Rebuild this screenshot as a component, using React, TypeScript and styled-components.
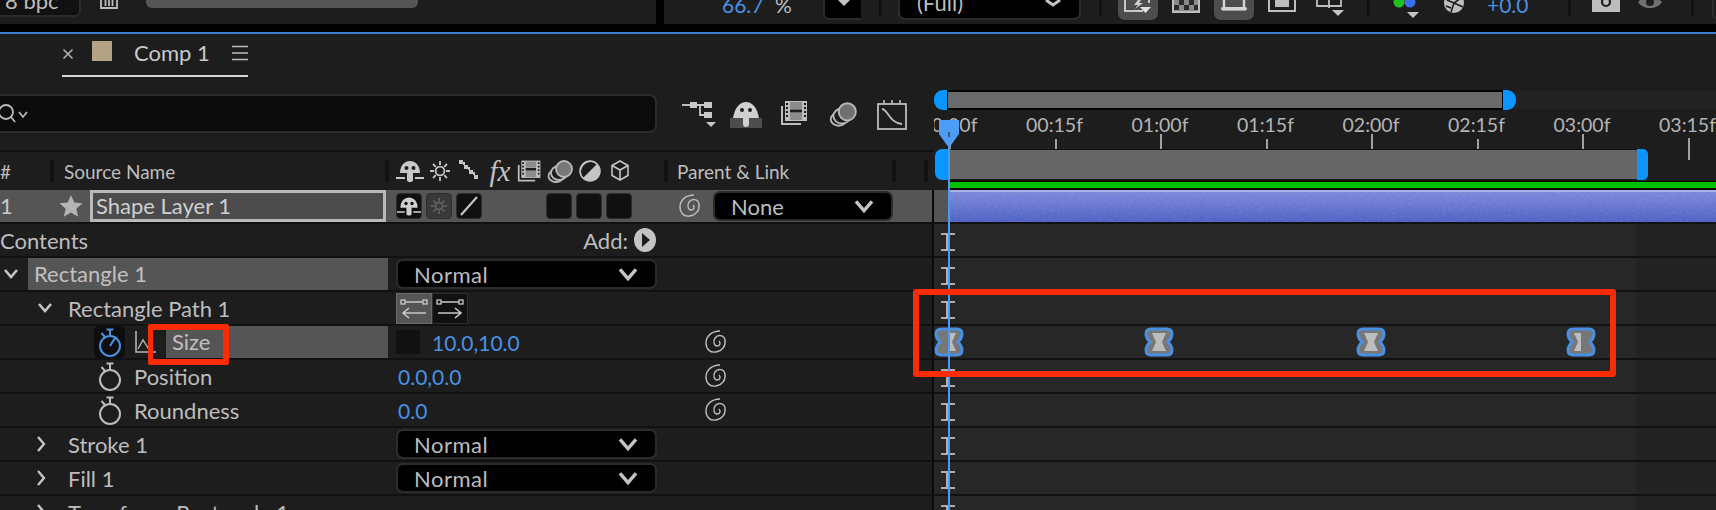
import React from "react";
import styled, { createGlobalStyle } from "styled-components";

const Global = createGlobalStyle`
  html, body { margin: 0; padding: 0; background: #1d1d1d; overflow: hidden; }
  body { font-family: Lato, "Open Sans", "Liberation Sans", sans-serif; color: #bdbdbd; }
  * { box-sizing: border-box; }
`;

const TEXT = "#bdbdbd";
const BLUE = "#4a90e2";

const Page = styled.div`
  position: relative;
  width: 1716px;
  height: 510px;
  overflow: hidden;
  background: #1d1d1d;
`;

/* ---------- top viewer toolbar ---------- */
const TopBar = styled.div`
  display: flex;
  align-items: flex-start;
  height: 32px;
  overflow: hidden;
  background: linear-gradient(#1d1d1d 24px, #000 24px);
`;
const BpcBox = styled.div`
  flex: none;
  width: 81px;
  height: 17px;
  background: #111;
  border: 2px solid #2b2b2b;
  border-width: 0 2px 2px 0;
  border-radius: 0 0 6px 0;
  padding-left: 5px;
  font-size: 22px;
  line-height: 22px;
  color: ${TEXT};
  overflow: hidden;
  & > span { display: block; margin-top: -10px; white-space: nowrap; }
`;
const ToolIcon = styled.svg<{ $ml: number; $w: number }>`
  flex: none;
  display: block;
  margin-left: ${(p) => p.$ml}px;
  width: ${(p) => p.$w}px;
  height: 24px;
`;
const ProgressTrack = styled.div`
  flex: none;
  margin-left: 28px;
  width: 272px;
  height: 8px;
  background: #555;
  border-radius: 0 0 6px 6px;
`;
const PanelGap = styled.div`
  flex: none;
  margin-left: 238px;
  width: 8px;
  height: 24px;
  background: #000;
`;
const ZoomValue = styled.div`
  flex: none;
  margin: -6px 0 0 58px;
  width: 53px;
  font-size: 21px;
  line-height: 22px;
  color: ${BLUE};
`;
const Percent = styled.div`
  flex: none;
  margin-top: -6px;
  width: 48px;
  font-size: 21px;
  line-height: 22px;
  color: ${TEXT};
`;
const MiniSelect = styled.div`
  flex: none;
  position: relative;
  width: 38px;
  height: 20px;
  background: #000;
  border: 2px solid #2b2b2b;
  border-top: 0;
  border-right: 0;
  border-radius: 0 0 0 6px;
`;
const TopSep = styled.div<{ $ml: number }>`
  flex: none;
  margin-left: ${(p) => p.$ml}px;
  width: 3px;
  height: 16px;
  background: #111;
`;
const FullSelect = styled.div`
  flex: none;
  display: flex;
  justify-content: space-between;
  margin-left: 16px;
  width: 183px;
  height: 20px;
  background: #000;
  border: 2px solid #2b2b2b;
  border-top: 0;
  border-radius: 0 0 7px 7px;
  padding: 0 16px 0 17px;
  font-size: 22px;
  line-height: 22px;
  color: ${TEXT};
  overflow: hidden;
  & > span { margin-top: -8px; }
`;
const ToggleOn = styled.div<{ $ml: number }>`
  flex: none;
  margin-left: ${(p) => p.$ml}px;
  width: 40px;
  height: 20px;
  background: #4d4d4d;
  border-radius: 0 0 7px 7px;
  display: flex;
  justify-content: center;
`;
const Exposure = styled.div`
  flex: none;
  margin: -6px 0 0 21px;
  width: 41px;
  font-size: 21px;
  line-height: 22px;
  color: ${BLUE};
`;
const EdgeBox = styled.div`
  flex: none;
  margin-left: 18px;
  width: 6px;
  height: 20px;
  border: 2px solid #2b2b2b;
  border-right: 0;
  border-top: 0;
  border-radius: 0 0 0 6px;
`;
const FocusLine = styled.div`
  height: 2px;
  background: #3f7fce;
`;

/* ---------- tab bar ---------- */
const TabBar = styled.div`
  display: flex;
  height: 46px;
`;
const Tab = styled.div`
  display: flex;
  align-items: center;
  margin-left: 62px;
  width: 186px;
  height: 43px;
  border-bottom: 2px solid #d6d6d6;
`;
const TabClose = styled.span`
  width: 30px;
  display: block;
`;
const Swatch = styled.span`
  width: 20px;
  height: 20px;
  margin-bottom: 7px;
  background: #b3a284;
`;
const TabTitle = styled.span`
  margin-left: 22px;
  width: 98px;
  font-size: 22px;
  line-height: 26px;
  margin-bottom: 3px;
  color: #c8c8c8;
`;
const TabMenu = styled.svg`
  width: 16px;
  height: 16px;
  margin-bottom: 4px;
`;

/* ---------- split ---------- */
const Split = styled.div`
  display: flex;
`;
const LeftPane = styled.div`
  flex: none;
  width: 934px;
`;
const RightPane = styled.div`
  position: relative;
  flex: 1;
  min-width: 0;
  overflow: hidden;
`;

const ToolRow = styled.div`
  display: flex;
  align-items: flex-start;
  height: 72px;
  border-bottom: 2px solid #111;
`;
const SearchBox = styled.div`
  display: flex;
  align-items: center;
  margin-top: 14px;
  width: 657px;
  height: 39px;
  background: #0b0b0b;
  border: 2px solid #2b2b2b;
  border-left: 0;
  border-radius: 0 8px 8px 0;
`;
const PaneIcon = styled.svg<{ $ml: number; $w: number }>`
  flex: none;
  margin: 19px 0 0 ${(p) => p.$ml}px;
  width: ${(p) => p.$w}px;
  height: 32px;
`;

const HeaderRow = styled.div`
  display: flex;
  align-items: center;
  height: 38px;
  font-size: 19px;
  color: ${TEXT};
`;
const HeadSep = styled.div<{ $ml: number }>`
  flex: none;
  margin-left: ${(p) => p.$ml}px;
  width: 4px;
  height: 22px;
  background: #111;
`;
const HeadText = styled.span<{ $w: number; $ml: number }>`
  flex: none;
  margin-left: ${(p) => p.$ml}px;
  width: ${(p) => p.$w}px;
  white-space: nowrap;
`;
const HeadIcon = styled.svg`
  flex: none;
  width: 30px;
  height: 26px;
`;
const FxText = styled.span`
  flex: none;
  width: 30px;
  text-align: center;
  font-family: "Liberation Serif", serif;
  font-style: italic;
  font-size: 29px;
  line-height: 26px;
  color: #c4c4c4;
`;

/* ---------- layer rows ---------- */
const LayerRow = styled.div`
  display: flex;
  align-items: center;
  height: 34px;
  border-bottom: 2px solid #111;
  border-right: 2px solid #0a0a0a;
  background: #555;
  font-size: 22px;
  color: #c8c8c8;
`;
const LayerIndex = styled.span`
  width: 59px;
  line-height: 32px;
`;
const Star = styled.svg`
  flex: none;
  width: 24px;
  height: 24px;
  margin-right: 7px;
`;
const NameField = styled.div`
  flex: none;
  width: 296px;
  height: 32px;
  border: 3px solid #b9b9b9;
  background: #4b4b4b;
  padding-left: 3px;
  line-height: 26px;
  color: #cfcfcf;
`;
const SwitchGroup = styled.div<{ $ml: number }>`
  flex: none;
  display: flex;
  gap: 4px;
  margin-left: ${(p) => p.$ml}px;
`;
const SwitchBox = styled.div<{ $dim?: boolean }>`
  width: 26px;
  height: 26px;
  border: 1px solid #2e2e2e;
  border-radius: 4px;
  background: ${(p) => (p.$dim ? "#393939" : "#101010")};
  display: flex;
  align-items: center;
  justify-content: center;
`;
const SwitchIcon = styled.svg`
  width: 24px;
  height: 24px;
`;
const Spiral = styled.svg<{ $ml?: number }>`
  flex: none;
  display: block;
  width: 26px;
  height: 26px;
  margin-left: ${(p) => p.$ml ?? 3}px;
`;
const Select = styled.div<{ $w: number; $ml?: number; $track?: number }>`
  flex: none;
  display: flex;
  align-items: center;
  justify-content: space-between;
  width: ${(p) => p.$w}px;
  height: 30px;
  margin-left: ${(p) => p.$ml ?? 0}px;
  padding: 0 15px 0 16px;
  background: #000;
  border: 2px solid #2b2b2b;
  border-radius: 7px;
  font-size: 22px;
  color: ${TEXT};
  & > span { letter-spacing: ${(p) => p.$track ?? 0}px; }
`;
const Chevron = styled.svg`
  flex: none;
  width: 24px;
  height: 16px;
`;

const PropRow = styled.div`
  display: grid;
  grid-template-columns: 388px 312px 32px 1fr;
  align-items: center;
  height: 34px;
  border-bottom: 2px solid #111;
  border-right: 2px solid #0a0a0a;
  font-size: 22px;
  color: ${TEXT};
`;
const NameCell = styled.div<{ $indent: number }>`
  display: flex;
  align-items: center;
  height: 32px;
  padding-left: ${(p) => p.$indent}px;
  white-space: nowrap;
`;
const ValueCell = styled.div<{ $pad?: number }>`
  display: flex;
  align-items: center;
  height: 32px;
  padding-left: ${(p) => p.$pad ?? 8}px;
`;
const Twist = styled.svg<{ $mr: number }>`
  flex: none;
  width: 16px;
  height: 16px;
  margin-right: ${(p) => p.$mr}px;
`;
const Highlight = styled.div<{ $ml?: number }>`
  flex: 1;
  align-self: stretch;
  margin-left: ${(p) => p.$ml ?? 0}px;
  padding-left: 6px;
  background: #555;
  line-height: 32px;
  color: #c0c0c0;
`;
const AddLabel = styled.div`
  display: flex;
  align-items: center;
  justify-content: flex-end;
  gap: 5px;
  width: 261px;
  color: ${TEXT};
  font-size: 22px;
`;
const StopBox = styled.div<{ $on?: boolean }>`
  flex: none;
  width: 31px;
  height: 32px;
  margin-right: ${(p) => (p.$on ? 10 : 9)}px;
  border-radius: 5px;
  background: ${(p) => (p.$on ? "#0e0e0e" : "transparent")};
  display: flex;
  align-items: center;
  justify-content: center;
`;
const StopIcon = styled.svg`
  width: 26px;
  height: 30px;
`;
const GraphIcon = styled.svg`
  flex: none;
  width: 22px;
  height: 26px;
`;
const ExprSwatch = styled.div`
  flex: none;
  width: 24px;
  height: 24px;
  margin-right: 12px;
  background: #111;
`;
const BlueValue = styled.span`
  color: ${BLUE};
  font-size: 21px;
`;
const PathButtons = styled.div`
  display: flex;
`;
const PathButton = styled.div<{ $on?: boolean }>`
  width: 36px;
  height: 31px;
  background: ${(p) => (p.$on ? "#555" : "#111")};
  border: 1px solid ${(p) => (p.$on ? "#6a6a6a" : "#2e2e2e")};
  display: flex;
  align-items: center;
  justify-content: center;
`;

/* ---------- timeline ---------- */
const NavBar = styled.div`
  display: flex;
  height: 30px;
  padding-top: 10px;
`;
const NavCap = styled.div<{ $side: "l" | "r" }>`
  flex: none;
  width: 13px;
  height: 20px;
  background: #0b96ff;
  border-radius: ${(p) => (p.$side === "l" ? "9px 0 0 9px" : "0 9px 9px 0")};
`;
const NavFill = styled.div`
  flex: none;
  width: 556px;
  height: 20px;
  background: #6b6b6b;
  border: 2px solid #000;
  border-right-width: 1px;
  border-left-width: 1px;
`;
const NavRest = styled.div`
  flex: 1;
  height: 18px;
  margin-top: 1px;
  background: #222;
`;
const Ruler = styled.div`
  position: relative;
  height: 39px;
`;
const RulerLabel = styled.span`
  position: absolute;
  top: 3px;
  transform: translateX(-50%);
  font-size: 19.5px;
  line-height: 24px;
  color: #b4b4b4;
  white-space: nowrap;
`;
const Tick = styled.span<{ $h: number }>`
  position: absolute;
  top: ${(p) => 39 - p.$h}px;
  width: 2px;
  height: ${(p) => p.$h}px;
  background: #a0a0a0;
`;
const LongTick = styled(Tick)`
  top: 28px;
  height: 22px;
`;
const CompBar = styled.div`
  display: flex;
  height: 32px;
  margin-left: 1px;
`;
const CompCap = styled.div<{ $side: "l" | "r" }>`
  flex: none;
  width: ${(p) => (p.$side === "l" ? 14 : 11)}px;
  height: 31px;
  background: #0b96ff;
  border-radius: ${(p) => (p.$side === "l" ? "7px 0 0 7px" : "0 5px 5px 0")};
`;
const CompFill = styled.div`
  flex: none;
  width: 688px;
  height: 32px;
  background: #666;
  border: 2px solid #111;
  border-width: 1px 0 2px;
`;
const GreenBar = styled.div`
  height: 9px;
  margin-left: 15px;
  background: #00c000;
  border: 0 solid #000;
  border-width: 1px 0 2px;
`;
const TrackLayer = styled.div`
  display: flex;
  height: 34px;
  border-bottom: 2px solid #111;
`;
const LayerGutter = styled.div`
  flex: none;
  width: 15px;
  background: #555;
`;
const LayerClip = styled.div`
  position: relative;
  flex: 1;
  overflow: hidden;
  background: linear-gradient(#7786dc, #6b7bd8 30%, #4a5dc6);
  border-top: 2px solid #a7b2e6;
`;
const ClipGrain = styled.svg`
  position: absolute;
  inset: 0;
  width: 100%;
  height: 100%;
  opacity: 0.16;
`;
const TrackRow = styled.div`
  position: relative;
  height: 34px;
  border-bottom: 2px solid #111;
  background: linear-gradient(to right, #272727 702px, #222 702px);
`;
const IBeam = styled.div`
  position: absolute;
  top: 9px;
  left: 7px;
  width: 14px;
  height: 18px;
  border-top: 2px solid #b0b0b0;
  border-bottom: 2px solid #b0b0b0;
  &::before {
    content: "";
    position: absolute;
    left: 5px;
    top: 0;
    width: 4px;
    height: 14px;
    background: #b0b0b0;
  }
`;
const Keyframe = styled.svg`
  position: absolute;
  top: 1px;
  width: 30px;
  height: 30px;
  transform: translateX(-50%);
`;
const PlayLine = styled.div`
  position: absolute;
  left: 14px;
  top: 55px;
  width: 2px;
  height: 380px;
  background: #4a9bf2;
`;
const PlayHead = styled.svg`
  position: absolute;
  left: 4px;
  top: 40px;
  width: 22px;
  height: 28px;
`;

/* ---------- red annotations ---------- */
const SizeCallout = styled.div`
  position: absolute;
  left: 148px;
  top: 324px;
  width: 81px;
  height: 41px;
  border: 6px solid #fb2c05;
  border-left-width: 5px;
  border-radius: 2px;
`;
const KeyCallout = styled.div`
  position: absolute;
  left: 913px;
  top: 289px;
  width: 703px;
  height: 88px;
  border: 6px solid #fb2c05;
  border-radius: 3px;
`;

/* ---------- drawings ---------- */
const C = "#c4c4c4";

const ChevronDown = () => (
  <Chevron viewBox="0 0 20 14">
    <path d="M3 3l7 8 7-8" fill="none" stroke={C} strokeWidth="3" />
  </Chevron>
);
const TwistDown = ({ mr }: { mr: number }) => (
  <Twist $mr={mr} viewBox="0 0 16 16">
    <path d="M2 4l6 7 6-7" fill="none" stroke={C} strokeWidth="2.6" />
  </Twist>
);
const TwistRight = ({ mr }: { mr: number }) => (
  <Twist $mr={mr} viewBox="0 0 16 16">
    <path d="M5 1l6 7-6 7" fill="none" stroke={C} strokeWidth="2.4" />
  </Twist>
);
const SpiralPath = () => (
  <path
    d="M17 2C9 2 3 7 3 14c0 6 4 10 10 9 6-1 10-6 9-12-1-5-7-6-10-2-2 3-1 8 2 8 3 0 4-3 2-5"
    fill="none"
    stroke="#bdbdbd"
    strokeWidth="1.4"
  />
);
const ShyPaths = ({ color = "#d0d0d0", bg = "#111" }: { color?: string; bg?: string }) => (
  <>
    <path d="M4 15C4 7 9 3 14 3s10 4 10 12z" fill={color} />
    <circle cx="10.500" cy="10" r="2" fill={bg} />
    <circle cx="17.500" cy="10" r="2" fill={bg} />
    <rect x="11" y="14" width="6" height="10" rx="2" fill={color} />
    <path d="M0 20h9M19 20h9" stroke={color} strokeWidth="1.800" />
  </>
);
const Sun = ({ color = C }: { color?: string }) => (
  <g stroke={color} strokeWidth="1.8" fill="none">
    <circle cx="15" cy="13" r="4.4" />
    <path d="M15 3v4M15 19v4M5 13h4M21 13h4M8 6l2.8 2.8M22 6l-2.8 2.8M8 20l2.8-2.8M22 20l-2.8-2.8" />
  </g>
);
const FilmPaths = () => (
  <>
    <rect x="5" y="1" width="22" height="20" fill="#bdbdbd" />
    <rect x="10" y="2" width="12" height="7" fill="#8c8c8c" />
    <rect x="10" y="13" width="12" height="7" fill="#8c8c8c" />
    <rect x="10" y="9.5" width="12" height="3" fill="#1d1d1d" />
    <path d="M7 3v16M25 3v16" stroke="#1d1d1d" strokeWidth="2" strokeDasharray="2 2" />
    <path d="M2 6v18h19" fill="none" stroke="#bdbdbd" strokeWidth="2" />
  </>
);
const CirclesPaths = ({ fill }: { fill: string }) => (
  <g fill="none" stroke="#b8b8b8" strokeWidth="1.8">
    <ellipse cx="10" cy="18" rx="7.5" ry="6" />
    <ellipse cx="13" cy="15" rx="8" ry="7" fill="#1d1d1d" />
    <circle cx="18" cy="11" r="8" fill={fill} />
  </g>
);
const StopPaths = ({ color, needle }: { color: string; needle?: boolean }) => (
  <g fill="none" stroke={color} strokeWidth="2">
    <circle cx="13" cy="19" r="10" />
    <path d="M9.500 2.500h7M13 3v6M4.500 6l3.500 4" />
    {needle && <path d="M13 19l5-8" />}
  </g>
);
const KEY_OUTLINE =
  "M7 2H23Q28 2 28 7Q28 11 24 15Q28 19 28 23Q28 28 23 28H7Q2 28 2 23Q2 19 6 15Q2 11 2 7Q2 2 7 2Z";
const KEY_INNER: Record<string, string> = {
  full: "M8 6H22L18 15L22 24H8L12 15Z",
  right: "M15 6H22L18 15L22 24H15Z",
  left: "M15 6H8L12 15L8 24H15Z",
};

const RULER = ["00:00f", "00:15f", "01:00f", "01:15f", "02:00f", "02:15f", "03:00f", "03:15f"];
const TICK_STEP = 105.5;
const ORIGIN = 15;
const KEYS = [
  { at: 0, part: "right" },
  { at: 209.5, part: "full" },
  { at: 422, part: "full" },
  { at: 631.5, part: "left" },
];

const App = () => (
  <Page>
    <Global />
    <TopBar>
      <BpcBox><span>8 bpc</span></BpcBox>
      <ToolIcon $ml={19} $w={18} viewBox="0 0 18 24">
        <path d="M1 0v8h16V0M5.500 0v6M9 0v6M12.500 0v6" fill="none" stroke="#bdbdbd" strokeWidth="1.8" />
      </ToolIcon>
      <ProgressTrack />
      <PanelGap />
      <ZoomValue>66.7</ZoomValue>
      <Percent>%</Percent>
      <MiniSelect>
        <svg width="36" height="18" viewBox="0 0 36 18">
          <path d="M13 0h12l-6 6z" fill={C} />
        </svg>
      </MiniSelect>
      <TopSep $ml={18} />
      <FullSelect>
        <span>(Full)</span>
        <svg width="20" height="14" viewBox="0 0 20 14">
          <path d="M3 0l7 5 7-5" fill="none" stroke={C} strokeWidth="3" />
        </svg>
      </FullSelect>
      <TopSep $ml={18} />
      <ToggleOn $ml={16}>
        <svg width="30" height="20" viewBox="0 0 30 20">
          <path d="M2 0v11h18M26 0v3" fill="none" stroke="#c8c8c8" strokeWidth="2" />
          <path d="M15 0l-4 5h4l-3 4 8-6h-4l2-3z" fill="#d0d0d0" />
          <path d="M17 7h11l-5.500 6z" fill="#e0e0e0" />
        </svg>
      </ToggleOn>
      <ToolIcon $ml={14} $w={28} viewBox="0 0 28 24">
        <path d="M1 0h26v11H1z" fill="#8a8a8a" />
        <path d="M7 0h5v5H7zM17 0h5v5h-5zM2 5h5v5H2zM12 5h5v5h-5zM22 5h4v5h-4z" fill="#2a2a2a" />
        <path d="M1 0v12h26V0" fill="none" stroke="#bdbdbd" strokeWidth="2" />
      </ToolIcon>
      <ToggleOn $ml={14}>
        <svg width="30" height="20" viewBox="0 0 30 20">
          <path d="M5 0v9h20V0" fill="none" stroke="#d4d4d4" strokeWidth="2.400" />
          <rect x="2" y="7" width="26" height="3.600" rx="1.800" fill="#d4d4d4" />
        </svg>
      </ToggleOn>
      <ToolIcon $ml={14} $w={28} viewBox="0 0 28 24">
        <path d="M1 0v11h26V0" fill="none" stroke="#bdbdbd" strokeWidth="2" />
        <rect x="7" y="0" width="14" height="7" fill="#bdbdbd" />
      </ToolIcon>
      <ToolIcon $ml={20} $w={30} viewBox="0 0 30 24">
        <path d="M1 0v6h24V0M13 0v8" fill="none" stroke="#bdbdbd" strokeWidth="1.800" />
        <path d="M16 10h12l-6 6z" fill={C} />
      </ToolIcon>
      <TopSep $ml={21} />
      <ToolIcon $ml={22} $w={30} viewBox="0 0 30 24">
        <circle cx="7" cy="2" r="5.500" fill="#1fc01f" />
        <circle cx="18" cy="2" r="5.500" fill="#3c6ef0" />
        <path d="M15 12h12l-6 6z" fill={C} />
      </ToolIcon>
      <ToolIcon $ml={20} $w={24} viewBox="0 0 24 24">
        <circle cx="12" cy="3" r="10" fill="#bdbdbd" />
        <path d="M12 3L5 0M12 3l7-5M12 3l9 4M12 3l-3 9M4 6l5 2" stroke="#1d1d1d" strokeWidth="1.600" />
      </ToolIcon>
      <Exposure>+0.0</Exposure>
      <TopSep $ml={40} />
      <ToolIcon $ml={21} $w={28} viewBox="0 0 28 24">
        <rect x="0" y="0" width="28" height="12" fill="#bdbdbd" />
        <circle cx="14" cy="2" r="4" fill="none" stroke="#1d1d1d" strokeWidth="2.200" />
      </ToolIcon>
      <ToolIcon $ml={18} $w={24} viewBox="0 0 24 24">
        <path d="M0 2C5-4 19-4 24 2 19 10 5 10 0 2z" fill="#707070" />
        <circle cx="12" cy="2" r="4" fill="#1d1d1d" />
      </ToolIcon>
      <TopSep $ml={29} />
      <EdgeBox />
    </TopBar>
    <FocusLine />
    <TabBar>
      <Tab>
        <TabClose>
          <svg width="12" height="12" viewBox="0 0 12 12" style={{ display: "block", marginTop: -2 }}>
            <path d="M1.500 1.500l9 9M10.500 1.500l-9 9" stroke="#b4b4b4" strokeWidth="1.500" />
          </svg>
        </TabClose>
        <Swatch />
        <TabTitle>Comp 1</TabTitle>
        <TabMenu viewBox="0 0 16 16">
          <path d="M0 1.500h16M0 8h16M0 14.500h16" stroke="#bdbdbd" strokeWidth="1.600" />
        </TabMenu>
      </Tab>
    </TabBar>
    <Split>
      <LeftPane>
        <ToolRow>
          <SearchBox>
            <svg width="32" height="26" viewBox="0 0 32 26">
              <circle cx="6" cy="11" r="7" fill="none" stroke="#bdbdbd" strokeWidth="1.800" />
              <path d="M11 16l4 5M19 11l4 5 4-5" fill="none" stroke="#bdbdbd" strokeWidth="1.700" />
            </svg>
          </SearchBox>
          <PaneIcon $ml={25} $w={34} viewBox="0 0 34 32">
            <path d="M0 6h8" stroke="#bdbdbd" strokeWidth="2" />
            <rect x="8" y="3" width="7" height="6" fill="#c8c8c8" />
            <rect x="22" y="3" width="8" height="6" fill="#c8c8c8" />
            <rect x="22" y="13" width="8" height="6" fill="#c8c8c8" />
            <path d="M15 6h7M18 6v10h4" fill="none" stroke="#c8c8c8" strokeWidth="1.800" />
            <path d="M24 23h10l-5 5z" fill="#c8c8c8" />
          </PaneIcon>
          <PaneIcon $ml={14} $w={32} viewBox="0 0 32 32">
            <rect x="0" y="19" width="32" height="10" fill="#4d4d4d" />
            <path d="M3 19C5 8 10 3 16 3s11 5 13 16z" fill="#d0d0d0" />
            <circle cx="12" cy="11" r="2" fill="#1d1d1d" />
            <circle cx="20" cy="11" r="2" fill="#1d1d1d" />
            <rect x="13" y="17" width="6" height="11" rx="3" fill="#d0d0d0" />
          </PaneIcon>
          <PaneIcon $ml={18} $w={28} viewBox="0 0 28 30">
            <FilmPaths />
          </PaneIcon>
          <PaneIcon $ml={20} $w={30} viewBox="0 0 28 28">
            <CirclesPaths fill="#707070" />
          </PaneIcon>
          <PaneIcon $ml={18} $w={32} viewBox="0 0 32 32">
            <rect x="2" y="5" width="28" height="25" fill="none" stroke="#bdbdbd" strokeWidth="1.800" />
            <path d="M8 1v4M16 1v4M24 1v4" stroke="#bdbdbd" strokeWidth="1.600" />
            <path d="M6 10c6 0 7 14 20 15" fill="none" stroke="#bdbdbd" strokeWidth="1.800" />
          </PaneIcon>
        </ToolRow>
        <HeaderRow>
          <HeadText $ml={0} $w={50}>#</HeadText>
          <HeadSep $ml={0} />
          <HeadText $ml={10} $w={321}>Source Name</HeadText>
          <HeadSep $ml={0} />
          <HeadIcon viewBox="0 0 28 26" style={{ marginLeft: 6 }}>
            <ShyPaths color="#c8c8c8" bg="#1d1d1d" />
          </HeadIcon>
          <HeadIcon viewBox="0 0 30 26"><Sun /></HeadIcon>
          <HeadIcon viewBox="0 0 30 26">
            <path d="M4 2h4v4H4zM9 7h4v4H9zM14 12h4v4h-4zM19 17h4v4h-4z" fill={C} />
            <path d="M8 4h2v3H8zM13 9h2v3h-2zM18 14h2v3h-2z" fill={C} />
          </HeadIcon>
          <FxText>fx</FxText>
          <HeadIcon viewBox="0 -2 30 30"><FilmPaths /></HeadIcon>
          <HeadIcon viewBox="0 0 28 26"><CirclesPaths fill="#787878" /></HeadIcon>
          <HeadIcon viewBox="0 0 30 26">
            <circle cx="15" cy="13" r="10" fill="#c4c4c4" />
            <path d="M8 20A10 10 0 0 1 22 6z" fill="#1d1d1d" />
            <circle cx="15" cy="13" r="10" fill="none" stroke="#c4c4c4" strokeWidth="1.500" />
          </HeadIcon>
          <HeadIcon viewBox="0 0 30 26">
            <path d="M15 3l8 4.500v10L15 22l-8-4.500v-10zM7 7.500l8 4.500 8-4.500M15 12v10" fill="none" stroke={C} strokeWidth="1.600" />
          </HeadIcon>
          <HeadSep $ml={29} />
          <HeadText $ml={9} $w={215}>Parent &amp; Link</HeadText>
          <HeadSep $ml={0} />
          <HeadSep $ml={28} />
        </HeaderRow>

        <LayerRow>
          <LayerIndex>1</LayerIndex>
          <Star viewBox="0 0 24 24">
            <path d="M12 1l3.300 7.600 8.200.7-6.200 5.400 1.900 8.100L12 18.500l-7.200 4.300 1.900-8.100L.5 9.300l8.200-.7z" fill="#b4b4b4" />
          </Star>
          <NameField>Shape Layer 1</NameField>
          <SwitchGroup $ml={10}>
            <SwitchBox>
              <SwitchIcon viewBox="0 0 28 26"><ShyPaths /></SwitchIcon>
            </SwitchBox>
            <SwitchBox $dim>
              <SwitchIcon viewBox="0 0 30 26"><Sun color="#6a6a6a" /></SwitchIcon>
            </SwitchBox>
            <SwitchBox>
              <SwitchIcon viewBox="0 0 24 24">
                <path d="M4 21L20 3" stroke={C} strokeWidth="2.200" />
              </SwitchIcon>
            </SwitchBox>
          </SwitchGroup>
          <SwitchGroup $ml={64}>
            <SwitchBox />
            <SwitchBox />
            <SwitchBox />
          </SwitchGroup>
          <Spiral $ml={45} viewBox="0 0 26 26"><SpiralPath /></Spiral>
          <Select $w={180} $ml={10}>
            <span>None</span>
            <ChevronDown />
          </Select>
        </LayerRow>

        <PropRow>
          <NameCell $indent={0}>Contents</NameCell>
          <ValueCell>
            <AddLabel>
              Add:
              <svg width="24" height="26" viewBox="0 0 24 26">
                <ellipse cx="12" cy="13" rx="11" ry="12" fill="#c4c4c4" />
                <path d="M9 6l8 7-8 7z" fill="#1d1d1d" />
              </svg>
            </AddLabel>
          </ValueCell>
        </PropRow>

        <PropRow>
          <NameCell $indent={3}>
            <TwistDown mr={9} />
            <Highlight>Rectangle 1</Highlight>
          </NameCell>
          <ValueCell>
            <Select $w={261} $track={0.5}>
              <span>Normal</span>
              <ChevronDown />
            </Select>
          </ValueCell>
        </PropRow>

        <PropRow>
          <NameCell $indent={37}>
            <TwistDown mr={15} />
            Rectangle Path 1
          </NameCell>
          <ValueCell>
            <PathButtons>
              <PathButton $on>
                <svg width="30" height="26" viewBox="0 0 30 26">
                  <path d="M6 7h18" stroke="#c8c8c8" strokeWidth="1.500" />
                  <rect x="2" y="5" width="4" height="4" fill="none" stroke="#c8c8c8" strokeWidth="1.300" />
                  <rect x="24" y="5" width="4" height="4" fill="none" stroke="#c8c8c8" strokeWidth="1.300" />
                  <path d="M27 18H5M10 13l-6 5 6 5" fill="none" stroke="#c8c8c8" strokeWidth="1.600" />
                </svg>
              </PathButton>
              <PathButton>
                <svg width="30" height="26" viewBox="0 0 30 26">
                  <path d="M6 7h18" stroke="#c8c8c8" strokeWidth="1.500" />
                  <rect x="2" y="5" width="4" height="4" fill="none" stroke="#c8c8c8" strokeWidth="1.300" />
                  <rect x="24" y="5" width="4" height="4" fill="none" stroke="#c8c8c8" strokeWidth="1.300" />
                  <path d="M3 18h22M20 13l6 5-6 5" fill="none" stroke="#c8c8c8" strokeWidth="1.600" />
                </svg>
              </PathButton>
            </PathButtons>
          </ValueCell>
        </PropRow>

        <PropRow>
          <NameCell $indent={94}>
            <StopBox $on>
              <StopIcon viewBox="0 0 26 30"><StopPaths color={BLUE} needle /></StopIcon>
            </StopBox>
            <GraphIcon viewBox="0 0 22 26">
              <path d="M1 2v21h20" fill="none" stroke="#b4b4b4" strokeWidth="1.600" />
              <path d="M3 20l5-9 5 8 3-3" fill="none" stroke="#b4b4b4" strokeWidth="1.400" />
            </GraphIcon>
            <Highlight $ml={9}>Size</Highlight>
          </NameCell>
          <ValueCell>
            <ExprSwatch />
            <BlueValue>10.0,10.0</BlueValue>
          </ValueCell>
          <Spiral viewBox="0 0 26 26"><SpiralPath /></Spiral>
        </PropRow>

        <PropRow>
          <NameCell $indent={94}>
            <StopBox>
              <StopIcon viewBox="0 0 26 30"><StopPaths color="#bdbdbd" /></StopIcon>
            </StopBox>
            Position
          </NameCell>
          <ValueCell $pad={10}><BlueValue>0.0,0.0</BlueValue></ValueCell>
          <Spiral viewBox="0 0 26 26"><SpiralPath /></Spiral>
        </PropRow>

        <PropRow>
          <NameCell $indent={94}>
            <StopBox>
              <StopIcon viewBox="0 0 26 30"><StopPaths color="#bdbdbd" /></StopIcon>
            </StopBox>
            Roundness
          </NameCell>
          <ValueCell $pad={10}><BlueValue>0.0</BlueValue></ValueCell>
          <Spiral viewBox="0 0 26 26"><SpiralPath /></Spiral>
        </PropRow>

        <PropRow>
          <NameCell $indent={33}>
            <TwistRight mr={19} />
            Stroke 1
          </NameCell>
          <ValueCell>
            <Select $w={261} $track={0.5}><span>Normal</span><ChevronDown /></Select>
          </ValueCell>
        </PropRow>

        <PropRow>
          <NameCell $indent={33}>
            <TwistRight mr={19} />
            Fill 1
          </NameCell>
          <ValueCell>
            <Select $w={261} $track={0.5}><span>Normal</span><ChevronDown /></Select>
          </ValueCell>
        </PropRow>

        <PropRow>
          <NameCell $indent={33}>
            <TwistRight mr={19} />
            Transform: Rectangle 1
          </NameCell>
        </PropRow>
      </LeftPane>

      <RightPane>
        <NavBar>
          <NavCap $side="l" />
          <NavFill />
          <NavCap $side="r" />
          <NavRest />
        </NavBar>
        <Ruler>
          {RULER.map((label, i) => (
            <React.Fragment key={label}>
              <RulerLabel style={{ left: ORIGIN + i * TICK_STEP }}>{label}</RulerLabel>
              {i === 7 ? (
                <LongTick $h={22} style={{ left: ORIGIN + i * TICK_STEP }} />
              ) : (
                <Tick $h={i % 2 === 0 ? 15 : 10} style={{ left: ORIGIN + i * TICK_STEP }} />
              )}
            </React.Fragment>
          ))}
        </Ruler>
        <CompBar>
          <CompCap $side="l" />
          <CompFill />
          <CompCap $side="r" />
        </CompBar>
        <GreenBar />
        <TrackLayer>
          <LayerGutter />
          <LayerClip>
            <ClipGrain>
              <filter id="grain">
                <feTurbulence type="fractalNoise" baseFrequency="0.35" numOctaves="2" />
                <feColorMatrix type="saturate" values="0" />
              </filter>
              <rect width="100%" height="100%" filter="url(#grain)" />
            </ClipGrain>
          </LayerClip>
        </TrackLayer>
        {[0, 1, 2].map((n) => (
          <TrackRow key={n}><IBeam /></TrackRow>
        ))}
        <TrackRow>
          {KEYS.map((k) => (
            <Keyframe key={k.at} viewBox="0 0 30 30" style={{ left: ORIGIN + k.at }}>
              <path d={KEY_OUTLINE} fill="#777" stroke={BLUE} strokeWidth="3" />
              <path d={KEY_INNER[k.part]} fill="#bcbcbc" />
            </Keyframe>
          ))}
        </TrackRow>
        {[0, 1, 2, 3, 4].map((n) => (
          <TrackRow key={n}><IBeam /></TrackRow>
        ))}
        <PlayLine />
        <PlayHead viewBox="0 0 22 28">
          <path d="M1 0h20v14L11 28 1 14z" fill="#4d9df5" />
          <path d="M11 12v5" stroke="#1d1d1d" strokeWidth="1" />
        </PlayHead>
      </RightPane>
    </Split>
    <SizeCallout />
    <KeyCallout />
  </Page>
);

export default App;
